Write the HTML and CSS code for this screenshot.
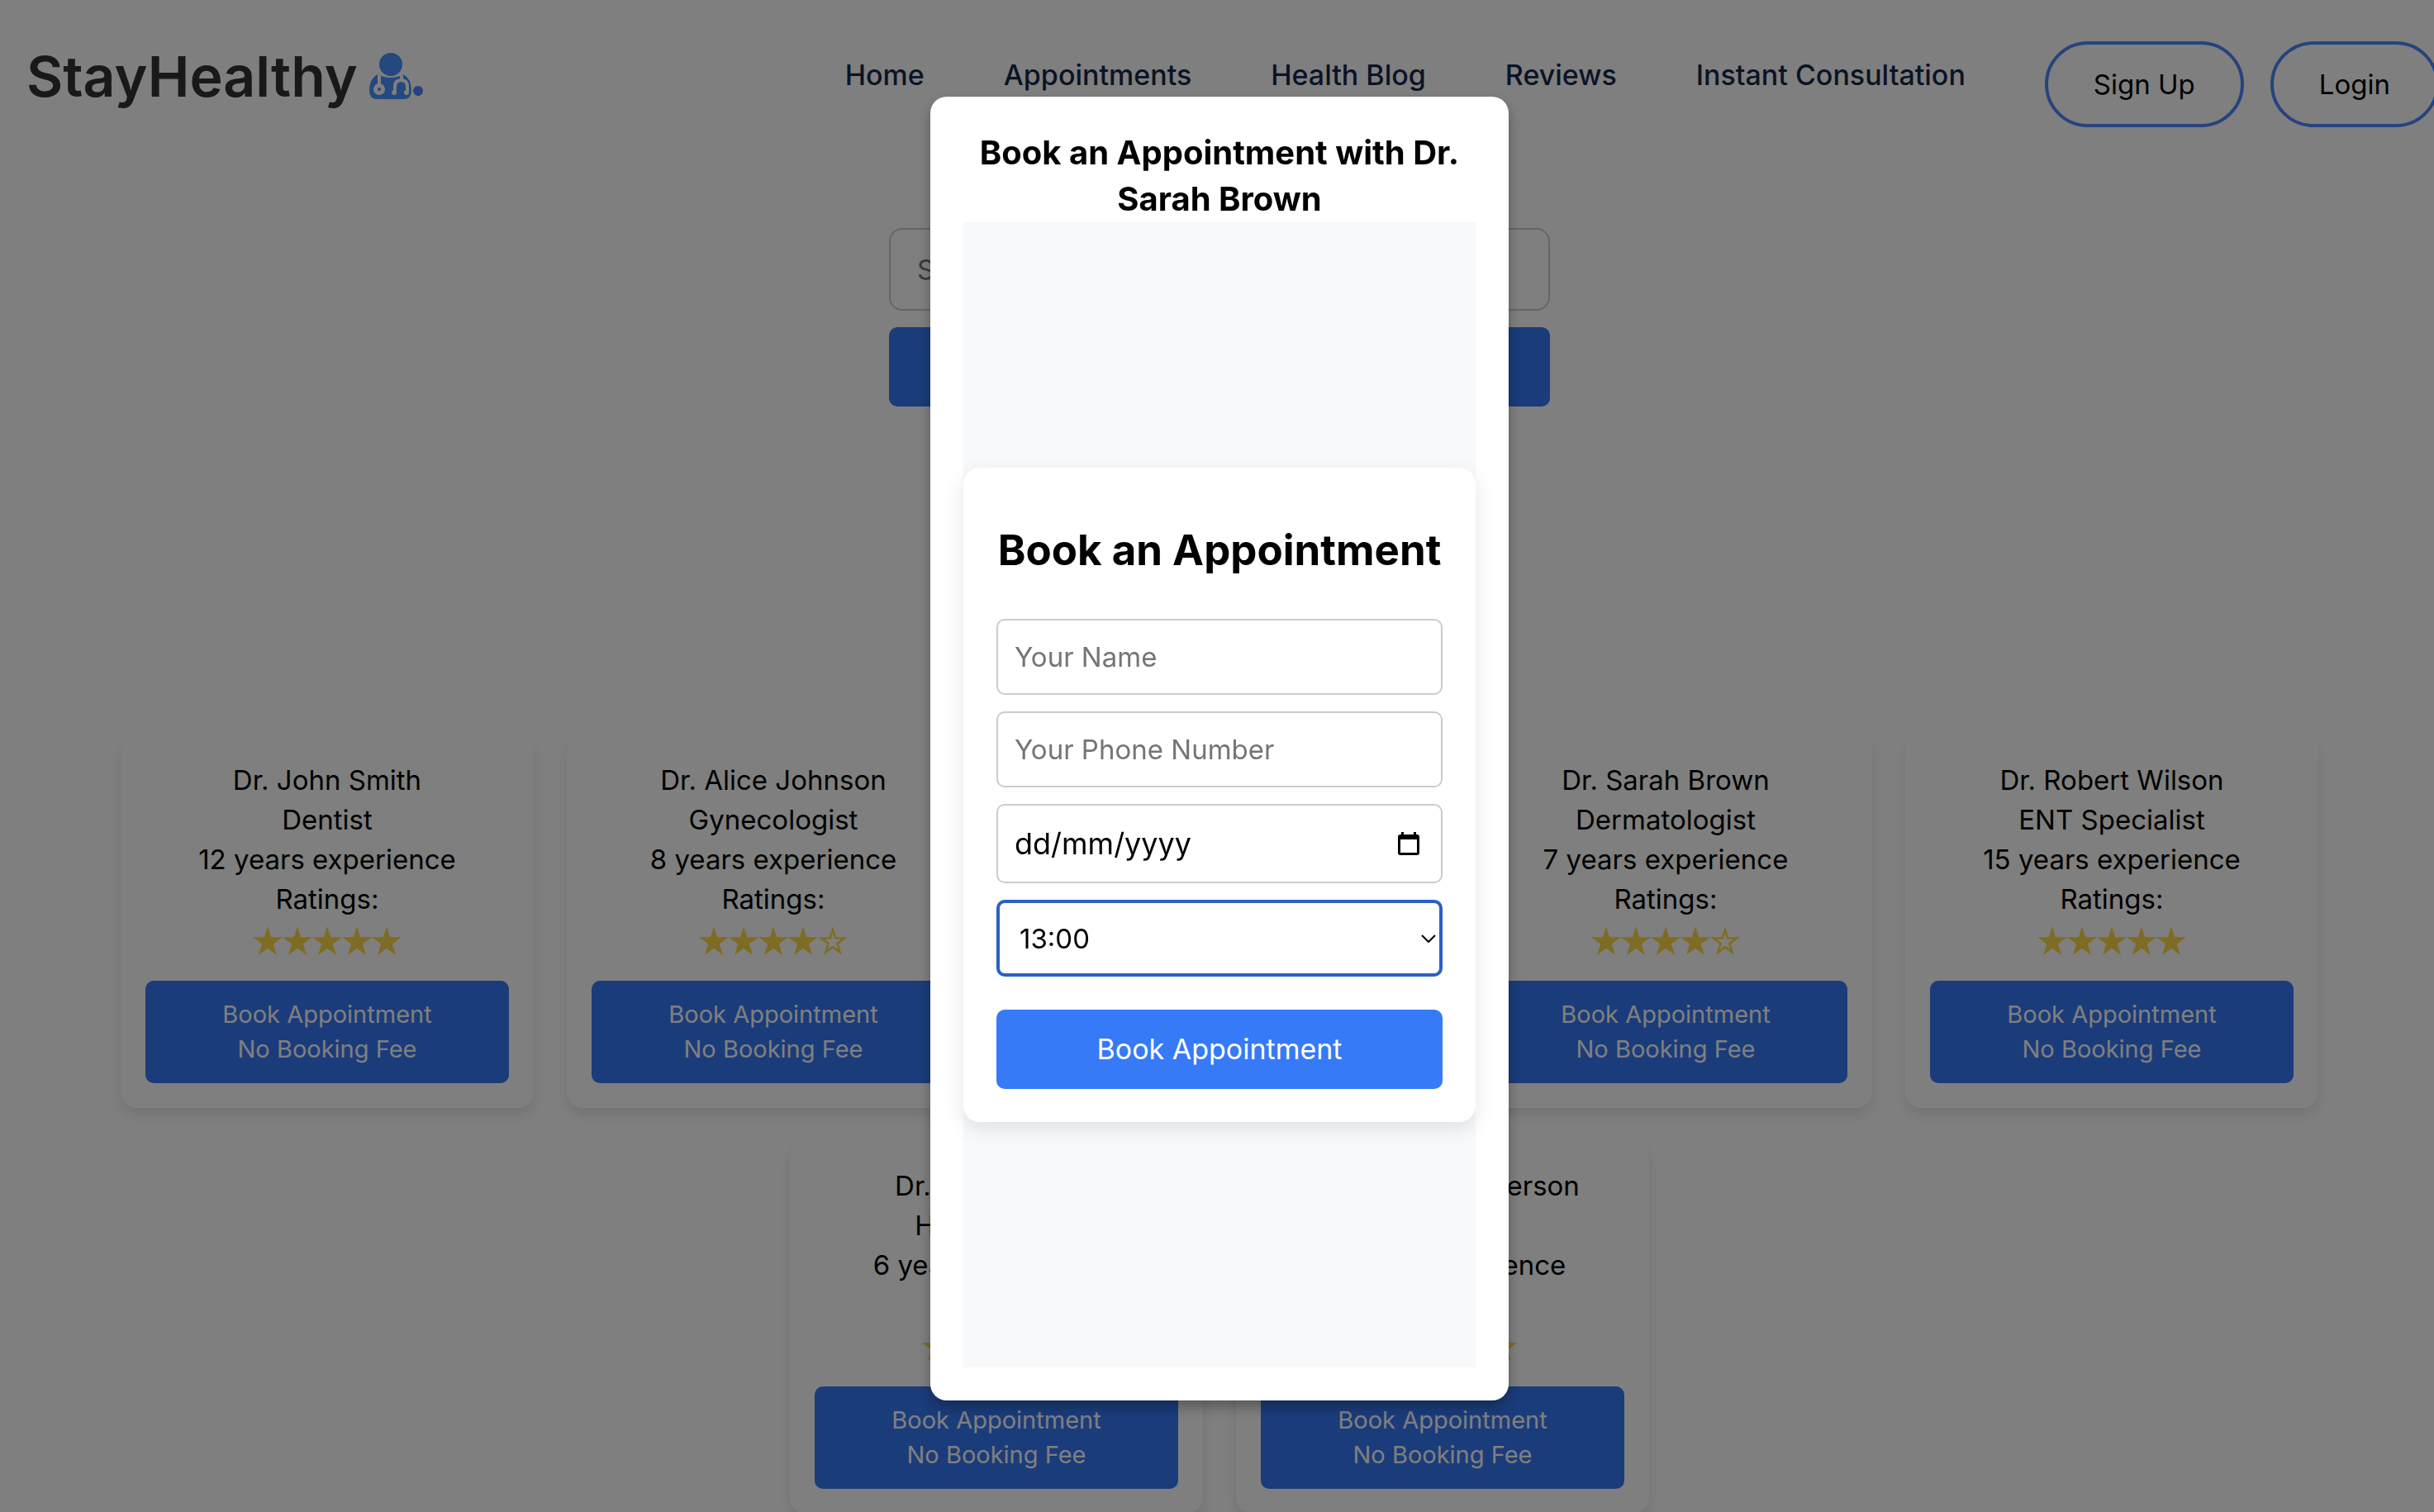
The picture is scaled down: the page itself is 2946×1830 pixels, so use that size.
FILE: index.html
```html
<!DOCTYPE html>
<html lang="en">
<head>
<meta charset="utf-8">
<title>StayHealthy</title>
<link rel="stylesheet" href="styles.css">
</head>
<body>
<svg class="sprite" aria-hidden="true">
  <symbol id="star" viewBox="0 0 36 36"><path d="M18 0l4.200 13.200H36L24.900 21.600 29 35 18 26.800 7 35l4.100-13.400L0 13.200h13.800z"/></symbol>
  <symbol id="star-empty" viewBox="0 0 36 36"><path fill-rule="evenodd" d="M18 0l4.200 13.200H36L24.900 21.600 29 35 18 26.800 7 35l4.100-13.400L0 13.200h13.800zM18 8.500l-2.300 7.300H8l6.200 4.600-2.400 7.700L18 23.500l6.200 4.600-2.400-7.700 6.200-4.600h-7.700z"/></symbol>
</svg>
<div class="page">
  <header class="header">
    <a class="logo" href="#">StayHealthy
      <svg class="doctor" viewBox="0 0 66 56" aria-hidden="true">
        <circle cx="26" cy="14" r="14"/>
        <path d="M10 26Q0 31 0 46Q0 56 10 56H41Q51 56 51 46Q51 31 41 26Q26 34 10 26z"/>
        <path class="tube" d="M12 24v15M39 24v9M31 47v-6q0-8 7.500-8t7.500 8v6"/>
        <circle class="end" cx="12" cy="44" r="7"/>
        <circle cx="12" cy="44" r="2"/>
        <circle class="end" cx="30" cy="48" r="3"/>
        <circle class="end" cx="45" cy="48" r="3"/>
        <circle class="dot" cx="59" cy="46" r="6"/>
      </svg>
    </a>
    <nav class="nav">
      <a href="#">Home</a>
      <a href="#">Appointments</a>
      <a href="#">Health Blog</a>
      <a href="#">Reviews</a>
      <a href="#">Instant Consultation</a>
    </nav>
    <div class="account">
      <button class="pill" type="button">Sign Up</button>
      <button class="pill" type="button">Login</button>
    </div>
  </header>
  <main>
    <form class="search">
      <input class="search-box" type="text" aria-label="Search doctors" placeholder="Search doctors">
      <button class="search-button" type="button" aria-label="Search"></button>
    </form>
    <section class="doctors">
      <article class="card"><p>Dr. John Smith</p><p>Dentist</p><p>12 years experience</p><p>Ratings:</p>
        <div class="stars"><svg><use href="#star"/></svg><svg><use href="#star"/></svg><svg><use href="#star"/></svg><svg><use href="#star"/></svg><svg><use href="#star"/></svg></div>
        <button class="book" type="button">Book Appointment<br>No Booking Fee</button></article>
      <article class="card"><p>Dr. Alice Johnson</p><p>Gynecologist</p><p>8 years experience</p><p>Ratings:</p>
        <div class="stars"><svg><use href="#star"/></svg><svg><use href="#star"/></svg><svg><use href="#star"/></svg><svg><use href="#star"/></svg><svg><use href="#star-empty"/></svg></div>
        <button class="book" type="button">Book Appointment<br>No Booking Fee</button></article>
      <article class="card covered"></article>
      <article class="card"><p>Dr. Sarah Brown</p><p>Dermatologist</p><p>7 years experience</p><p>Ratings:</p>
        <div class="stars"><svg><use href="#star"/></svg><svg><use href="#star"/></svg><svg><use href="#star"/></svg><svg><use href="#star"/></svg><svg><use href="#star-empty"/></svg></div>
        <button class="book" type="button">Book Appointment<br>No Booking Fee</button></article>
      <article class="card"><p>Dr. Robert Wilson</p><p>ENT Specialist</p><p>15 years experience</p><p>Ratings:</p>
        <div class="stars"><svg><use href="#star"/></svg><svg><use href="#star"/></svg><svg><use href="#star"/></svg><svg><use href="#star"/></svg><svg><use href="#star"/></svg></div>
        <button class="book" type="button">Book Appointment<br>No Booking Fee</button></article>
      <article class="card"><p>Dr. Emily Clarke</p><p>Hepatologist</p><p>6 years experience</p><p>Ratings:</p>
        <div class="stars"><svg><use href="#star"/></svg><svg><use href="#star"/></svg><svg><use href="#star"/></svg><svg><use href="#star"/></svg><svg><use href="#star-empty"/></svg></div>
        <button class="book" type="button">Book Appointment<br>No Booking Fee</button></article>
      <article class="card"><p>Dr. Jessica Anderson</p><p>Ayurveda</p><p>9 years experience</p><p>Ratings:</p>
        <div class="stars"><svg><use href="#star"/></svg><svg><use href="#star"/></svg><svg><use href="#star"/></svg><svg><use href="#star"/></svg><svg><use href="#star-empty"/></svg></div>
        <button class="book" type="button">Book Appointment<br>No Booking Fee</button></article>
    </section>
  </main>
</div>
<div class="overlay">
  <div class="modal" role="dialog" aria-labelledby="modal-title">
    <h3 class="modal-title" id="modal-title">Book an Appointment with Dr. Sarah Brown</h3>
    <div class="panel">
      <form class="form">
        <h2 class="form-title">Book an Appointment</h2>
        <input class="field" type="text" aria-label="Your Name" placeholder="Your Name">
        <input class="field" type="tel" aria-label="Your Phone Number" placeholder="Your Phone Number">
        <div class="field date">
          <input class="date-input" type="text" aria-label="Date" value="dd/mm/yyyy">
          <svg class="calendar" viewBox="0 0 26 28" aria-hidden="true"><path fill-rule="evenodd" d="M4 0h3v3h12V0h3v3h1q3 0 3 3v19q0 3-3 3H3q-3 0-3-3V6q0-3 3-3h1zM3 9v16h20V9z"/></svg>
        </div>
        <div class="field time">
          <select class="time-select" aria-label="Time"><option>13:00</option></select>
          <svg class="chevron" viewBox="0 0 18 10" aria-hidden="true"><path d="M1 1l8 8 8-8"/></svg>
        </div>
        <button class="submit" type="button">Book Appointment</button>
      </form>
    </div>
  </div>
</div>
</body>
</html>
```
FILE: styles.css
```css
* { box-sizing: border-box; }
body { margin: 0; overflow: hidden; background: #fff; color: #000; font: 33px/48px Inter, "Open Sans", sans-serif; }
p, h2, h3 { margin: 0; }
a { color: inherit; text-decoration: none; }
button, input, select { font: inherit; color: inherit; margin: 0; }
.sprite { position: absolute; width: 0; height: 0; }

.page, .overlay { width: calc(100% + 6px); }
.page { height: 100vh; overflow: hidden; }

.header { display: flex; align-items: flex-start; padding: 50px 0 0 32px; height: 276px; }
.logo { display: flex; gap: 14px; font-size: 68px; line-height: 84px; font-weight: 600; color: #333; white-space: nowrap; }
.doctor { width: 66px; height: 56px; margin-top: 14px; fill: #4692ff; }
.tube { fill: none; stroke: #fff; stroke-width: 4; }
.end { fill: #fff; }
.dot { fill: #4c84fa; }
.nav { display: flex; gap: 96px; margin-left: auto; padding-top: 17px; font-size: 34px; font-weight: 500; color: #14294a; }
.account { display: flex; gap: 32px; margin-left: 96px; }
.pill { height: 104px; padding: 0 55px; border: 4px solid #4c86ff; border-radius: 52px; background: none; }

.search { display: flex; flex-direction: column; gap: 20px; width: 800px; height: 614px; margin: 0 auto; }
.search-box { height: 100px; padding: 0 32px; border: 2px solid #ccc; border-radius: 16px; background: none; }
.search-button { height: 96px; border: 0; border-radius: 10px; background: #3678f5; color: #fff; }

.doctors { display: flex; flex-wrap: wrap; justify-content: center; gap: 40px; padding: 0 40px; }
.card { width: 500px; padding: 30px; border-radius: 20px; box-shadow: 0 8px 16px rgba(0,0,0,.1); text-align: center; }
.covered { visibility: hidden; }
.stars { display: flex; justify-content: center; padding: 9px 0 30px; fill: #fdd94a; }
.stars svg { width: 36px; height: 36px; }
.book { display: block; width: 100%; height: 124px; border: 0; border-radius: 10px; background: #3678f5; color: #fff; font-size: 29px; line-height: 42px; }

.overlay { position: fixed; inset: 0 auto 0 0; display: flex; align-items: center; justify-content: center; padding-bottom: 18px; background: rgba(0,0,0,.5); }
.modal { width: 700px; padding: 40px; border-radius: 20px; background: #fff; box-shadow: 0 8px 16px rgba(0,0,0,.3); text-align: center; }
.modal-title { font-size: 40px; line-height: 56px; font-weight: 700; }
.panel { display: flex; align-items: center; height: 1386px; background: #f8f9fb; }
.form { display: flex; flex-direction: column; gap: 20px; width: 100%; padding: 64px 40px 40px; border-radius: 20px; background: #fff; box-shadow: 0 8px 24px rgba(0,0,0,.1); }
.form-title { margin-bottom: 27px; font-size: 51px; line-height: 72px; font-weight: 700; white-space: nowrap; }
.field { width: 100%; height: 92px; padding: 0 20px; border: 2px solid #ccc; border-radius: 10px; background: #fff; }
::placeholder { color: #757575; opacity: 1; }
.date { display: flex; align-items: center; justify-content: space-between; height: 96px; font-size: 36px; }
.date-input { width: 300px; padding: 0; border: 0; background: none; }
.calendar { width: 26px; height: 28px; margin-right: 6px; }
.time { display: flex; align-items: center; height: 93px; padding: 0 4px 0 24px; border: 4px solid #2a60c8; }
.time-select { flex: 1; padding: 0; border: 0; background: none; appearance: none; outline: 0; }
.chevron { width: 18px; height: 10px; fill: none; stroke: #000; stroke-width: 2; }
.submit { height: 96px; margin-top: 20px; border: 0; border-radius: 10px; background: #367af7; color: #fff; font-size: 34px; }
```
